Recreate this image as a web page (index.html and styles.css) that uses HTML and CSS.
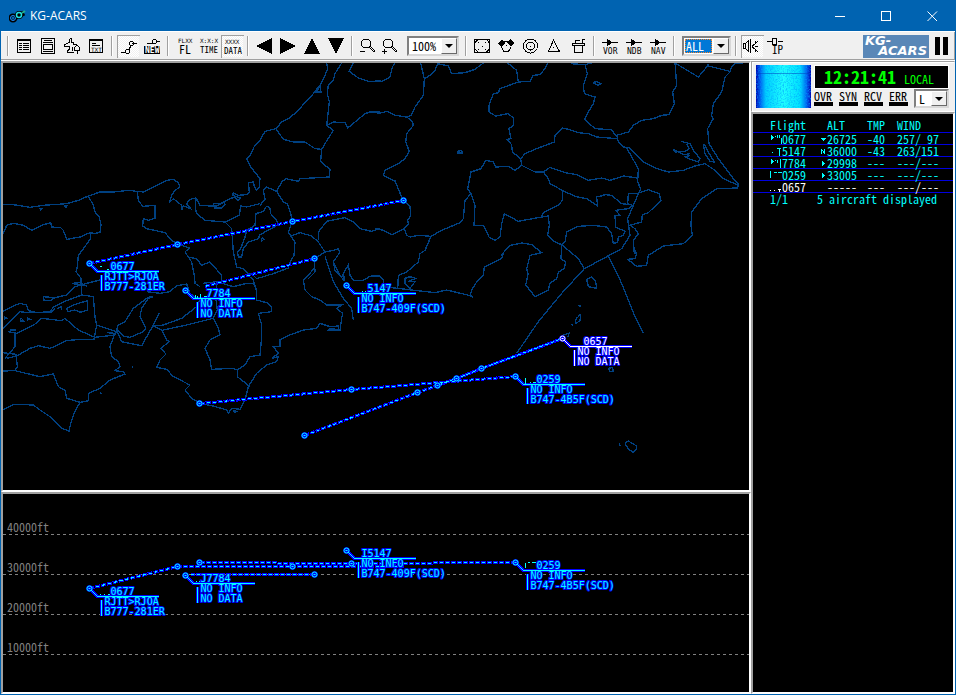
FILE: index.html
```html
<!DOCTYPE html>
<html lang="en">
<head>
<meta charset="utf-8">
<title>KG-ACARS</title>
<link rel="stylesheet" href="styles.css">
</head>
<body>
<header class="titlebar">
  <svg class="app-icon" width="18" height="14" viewBox="0 0 18 14" aria-hidden="true">
    <path d="M3 10L15 4" stroke="#000" stroke-width="5"/>
    <circle cx="4" cy="9" r="3" fill="#0063b1" stroke="#000" stroke-width="3"/>
    <circle cx="4" cy="9" r="2.5" fill="none" stroke="#2090ff"/>
    <circle cx="10" cy="6" r="3" fill="#000" stroke="#000" stroke-width="2"/>
    <circle cx="10" cy="6" r="2.5" fill="none" stroke="#20e0e0" stroke-width="1.5"/>
    <path d="M13 4L16 2" stroke="#20b090" stroke-width="2"/>
  </svg>
  <h1 class="title">KG-ACARS</h1>
  <button class="win-btn" aria-label="Minimize"><svg width="11" height="11"><path d="M0 5.5H10"/></svg></button>
  <button class="win-btn" aria-label="Maximize"><svg width="11" height="11"><path d="M.5.5H9.5V9.5H.5Z"/></svg></button>
  <button class="win-btn" aria-label="Close"><svg width="11" height="11"><path class="smooth" d="M.5.5L10 10M10 .5L.5 10"/></svg></button>
</header>

<nav class="toolbar" aria-label="Tools">
  <div class="group">
    <button class="tool" aria-label="Flight list"><svg><path d="M5.5 5.5H18.5V18.5H5.5ZM5 6.5H19M7 9.500H10M11 9.500H17M7 11.500H10M11 11.500H17M7 13.500H10M11 13.500H17M7 15.500H10M11 15.500H17"/></svg></button>
    <button class="tool" aria-label="Message window"><svg><path d="M5.500 4.500H18.500V19.500H5.500ZM8 6.500H16M7 8.500H17M7.500 10.500H16.500V15.500H7.500ZM7 17.500H17"/></svg></button>
    <button class="tool" aria-label="Aircraft"><svg><path d="M9.500 4.500H11.500V8.500H13.500V10.500H16.500M9.500 4.500V8.500L4.500 10.500V12.500H9.500V15.500L7.500 16.500V18.500H13.500M16.500 10.500L19.500 13.500V16.500H14.500V13.500L16.500 11.500M17.500 16.500V19.500M12.500 12.500V16.500"/></svg></button>
    <button class="tool" aria-label="Text log"><svg><path d="M5.500 5.500H18.500V18.500H5.500ZM5 6.500H19M8 9.500H12M8 11.500H16"/><text class="micro" x="7" y="18">TXT</text></svg></button>
  </div>
  <div class="group">
    <button class="tool pressed" aria-label="Show trails" aria-pressed="true"><svg><path d="M5 18.500H10M13 16L15 11M16 9.500H21"/><circle cx="11.500" cy="17.500" r="2"/><circle cx="15.500" cy="9.500" r="2"/></svg></button>
    <button class="tool" aria-label="New trail"><svg><path d="M7 9.500H13M16 7.500H20"/><circle cx="14.500" cy="7.500" r="2"/><rect class="solid" x="4" y="12" width="16" height="8"/><text class="inverse" x="5" y="19">NEW</text></svg></button>
  </div>
  <div class="group">
    <button class="tool" aria-label="Flight level"><svg><text class="micro" x="6" y="9">FLXX</text><text class="big" x="7" y="20">FL</text></svg></button>
    <button class="tool" aria-label="Time"><svg><text class="micro" x="4" y="9">X:X:X</text><text class="mid" x="4" y="19">TIME</text></svg></button>
    <button class="tool pressed" aria-label="Data" aria-pressed="true"><svg><text class="micro" x="5" y="10">XXXX</text><text class="mid" x="4" y="20">DATA</text></svg></button>
  </div>
  <div class="group">
    <button class="tool" aria-label="Left"><svg><path class="solid" d="M4 12L20 4V20Z"/></svg></button>
    <button class="tool" aria-label="Right"><svg><path class="solid" d="M20 12L4 4V20Z"/></svg></button>
    <button class="tool" aria-label="Up"><svg><path class="solid" d="M12 4L20 20H4Z"/></svg></button>
    <button class="tool" aria-label="Down"><svg><path class="solid" d="M12 20L20 4H4Z"/></svg></button>
  </div>
  <div class="group">
    <button class="tool" aria-label="Zoom out"><svg><circle cx="10" cy="9.500" r="4.500"/><path d="M13 13L18 18L19 17L14 12M4 17.500H9"/></svg></button>
    <button class="tool" aria-label="Zoom in"><svg><circle cx="8" cy="9.500" r="4.500"/><path d="M11 13L16 18L17 17L12 12M2 17.500H7M4.500 15V20"/></svg></button>
    <label class="combo zoom"><select aria-label="Zoom"><option>100%</option></select><span class="arrow"></span></label>
  </div>
  <div class="group">
    <button class="tool" aria-label="Range square"><svg><path d="M4.500 5.500H19.500V18.500H4.500ZM5 8.500L8.500 5M16 5L19.500 9M5 15L8.500 18.500M16 18.500L19.500 15M8 8.500H9M15 8.500H16M8 15.500H9M15 15.500H16M12 12.500H13"/></svg></button>
    <button class="tool" aria-label="Sectors"><svg><path class="solid" d="M4 9L8 5L11 9L7 13ZM20 9L16 5L13 9L17 13Z"/><path d="M9 7.500H15M7.500 13L10 17.500H14.500L17 13M12 11.500H13"/></svg></button>
    <button class="tool" aria-label="Rings"><svg><circle cx="12.500" cy="12" r="7"/><circle cx="12.500" cy="12" r="4"/><path d="M12 12.500H13"/></svg></button>
    <button class="tool" aria-label="Triangle"><svg><path d="M11.500 6L17.500 17.500H6.500ZM11 13.500H12"/></svg></button>
    <button class="tool" aria-label="Clear"><svg><path d="M6.500 9.500H18.500V11.500H6.500ZM8.500 12V18.500H16.500V12M9.500 9V6.500H13.500M16 9V5.500H19"/></svg></button>
  </div>
  <div class="group">
    <button class="tool" aria-label="VOR"><svg><path d="M4 8.500H20"/><path class="solid" d="M9 5L15 8.500L9 12Z"/><text class="small" x="5" y="20">VOR</text></svg></button>
    <button class="tool" aria-label="NDB"><svg><path d="M4 8.500H20"/><path class="solid" d="M9 5L15 8.500L9 12Z"/><text class="small" x="5" y="20">NDB</text></svg></button>
    <button class="tool" aria-label="NAV"><svg><path d="M4 8.500H20"/><path class="solid" d="M9 5L15 8.500L9 12Z"/><text class="small" x="5" y="20">NAV</text></svg></button>
  </div>
  <div class="group">
    <label class="combo filter"><select aria-label="Filter"><option>ALL</option></select><span class="arrow"></span></label>
  </div>
  <div class="group">
    <button class="tool pressed" aria-label="Mute" aria-pressed="true"><svg><path d="M3.500 9.500H5.500V14.500H3.500ZM6 9L9 6.500M6 15L9 17.500M8.500 6V18M10.500 5V19M12 12.500L18 7M12 12.500L18 18M15 12.500H18M15.500 7V10M15.500 15V18"/></svg></button>
    <button class="tool" aria-label="IP"><svg><path d="M3 7.500H9M14 7.500H19M8.500 4.500H12.500V10.500H8.500Z"/><text class="ip" x="8" y="20">IP</text></svg></button>
  </div>
  <div class="brand">
    <div class="logo"><span class="logo-top">KG-</span><span class="logo-bottom">ACARS</span></div>
    <button class="pause" aria-label="Pause"></button>
  </div>
</nav>

<main class="workspace">
  <div class="views">
    <section class="view map" aria-label="Map">
      <svg class="canvas">
        <g transform="translate(-3 -63)">
          <g class="coast">
            <g transform="translate(0 62) scale(.33333)">
              <polyline points="980,3 983,20 975,40 960,70 940,95 915,122 890,150 865,170 845,180 828,200 795,208 780,235 762,255 750,280 740,292 752,315 768,335 780,350 778,375 770,385 762,370 760,360 745,362 748,390 740,398 715,400 700,392 698,400 722,408 715,416 705,405 690,410 680,415 660,425 640,425 645,438 665,438 675,428 672,420 650,432 630,432 600,430 588,408 570,412 560,425 572,440 550,432 545,445 545,430 520,410 508,422 515,400 525,385 540,375 535,362 520,352 500,355 480,365 455,378 430,390 410,388 385,385 340,390 300,390 265,402 235,415 200,425 130,430 90,436 40,428 10,427"/>
              <polyline points="1025,3 1005,35 1000,55 985,68 982,95 988,120 980,190 1000,205 978,240 965,262 962,298 975,310 990,322 988,345 900,350 895,358 858,350 845,360 830,388"/>
              <polyline points="828,200 850,232 880,240 915,240 945,260 965,262"/>
              <polyline points="980,190 1000,180 1035,182 1043,198 1065,180 1095,155 1110,150 1140,150"/>
              <polyline points="1060,3 1048,28 1075,48 1105,58 1140,58"/>
              <polyline points="780,430 795,412 790,385 800,375 830,388 850,420 862,425 872,455 877,478 865,510 872,522 885,540 882,580 870,600 865,618"/>
              <polyline points="588,410 586,440 590,455 615,475 675,480 718,460 722,432 740,435 780,425"/>
              <polyline points="800,432 790,448 768,455 765,490 740,505 735,525 722,560 712,570 715,585 725,585 730,560 745,540 775,530 780,518 835,488 830,475 812,455 810,438 800,432"/>
              <polyline points="675,480 695,500 700,570 710,615 730,620 740,632 760,640 770,650 820,635 865,618"/>
              <polyline points="872,522 900,512 935,522 955,540 975,570 1000,565 1015,560 1020,570 1000,600 1005,625 1020,640"/>
              <polyline points="955,535 955,510 980,478 1035,467 1060,480 1080,500 1115,508 1140,500"/>
              <polyline points="975,570 943,590 945,630 925,650"/>
              <polyline points="1045,608 1030,635 1035,655 1028,640 1045,608 1050,640 1060,655 1090,655 1110,643 1140,640"/>
              <polyline points="265,402 280,430 285,450 298,465 303,490 300,510 285,515 270,512 240,525 200,532 190,505 182,497 155,495 152,482 125,490 95,505 70,490 40,484 20,490 10,515"/>
              <polyline points="270,512 272,530 250,560 235,580 232,614"/>
              <polyline points="412,388 415,415 428,433 465,430 465,468 445,475 430,470 428,492 440,500 495,512 515,535 530,545 568,558 555,570 575,600 583,640"/>
              <polyline points="565,585 590,590 605,610 630,600 665,640 665,660"/>
              <polyline points="948,82 960,75 963,90 948,90 955,80"/>
              <polyline points="785,527 792,532 785,537 785,527"/>
              <polyline points="118,440 125,440 120,445"/>
              <polyline points="192,430 202,430 198,437 192,430"/>
            </g>
            <g transform="translate(375 62) scale(.33333)">
              <polyline points="0,55 20,58 45,45 52,15 60,3"/>
              <polyline points="137,3 148,50 145,100 120,135 108,160 95,165 112,178 115,190 95,215 92,240 103,268 90,290 70,305 30,325 25,340 60,357 80,405 90,420 105,432 107,462 98,475 100,485 88,500 95,520 105,525 130,520 168,523"/>
              <polyline points="148,50 165,40 180,25 188,5 220,12 230,35 270,32 300,22 325,3"/>
              <polyline points="0,148 10,155 35,148 60,160 95,165"/>
              <polyline points="0,500 25,505 50,518 88,500"/>
              <polyline points="398,3 425,25 430,60 375,80 370,92 355,95 342,130 342,150 362,162 400,155 415,168 415,190 402,200 408,230 395,232 410,248 412,270 437,290"/>
              <polyline points="430,60 465,58 475,40 495,38 510,20 518,3"/>
              <polyline points="588,5 630,8 650,3"/>
              <polyline points="630,8 637,35 625,70 628,95 660,105 655,125 640,150 628,172 660,200 710,203 725,225"/>
              <polyline points="437,290 450,275 490,258 538,240 540,220 562,198 580,202 610,212 640,215 665,225 725,230"/>
              <polyline points="437,290 440,310 480,330 505,330 525,316 570,332 605,338 640,355 680,348 705,355 745,342 788,348"/>
              <polyline points="440,310 420,325 400,313 362,315 355,300 332,295 318,320 288,330 278,380 288,395 270,415 265,470 255,482 200,505 168,523 150,565 135,575 130,600 95,630 70,640 68,682"/>
              <polyline points="288,395 300,430 297,490 325,490 342,525 360,535 375,525 380,485 388,455 430,478 500,465 520,462 523,490 518,520 540,540 560,548"/>
              <polyline points="505,330 520,350 525,365 562,385 562,415 550,430 505,452 500,465"/>
              <polyline points="562,385 600,403 635,410 668,432 665,405 675,403 690,398 710,400 740,425 765,428"/>
              <polyline points="725,220 730,240 745,255 765,258 805,300 840,318 880,330 925,325 960,312 990,305 1020,325 1045,350 1090,370 1090,375"/>
              <polyline points="725,220 760,210 775,190 800,175 835,170 860,160 882,158 898,125 893,90 905,70 900,3"/>
              <polyline points="900,3 970,45 995,15 1000,5"/>
              <polyline points="1000,12 1065,28"/>
              <polyline points="1105,3 1080,3 1067,20 1065,30 1050,45 1040,90 1015,125 1010,160 1015,170 998,200 1002,245 1030,290 1060,330 1075,350 1090,365 1088,378 1025,380 980,410 950,450 948,490 952,520 925,545 865,552 820,580 815,610 785,613 758,592 780,590 785,575 778,575 775,535 790,515 780,500 765,490 800,480 802,458 820,452 858,415 852,395 820,383 800,390 785,395 760,395 758,425"/>
              <polyline points="755,258 790,320 788,360 797,380 775,430 758,470 762,500 765,520 740,560 628,620 560,694"/>
              <polyline points="758,425 772,430 760,440 722,445 735,460 720,462 722,495 750,508 745,520 730,525 728,540 715,545 710,515 695,495 655,490 610,493 575,510 570,540 560,548"/>
              <polyline points="560,548 610,590 628,620"/>
              <polyline points="560,548 558,590 572,600 568,620 550,630 545,650 525,664 520,684 480,704 452,669 460,634"/>
              <polyline points="700,583 740,664 780,764 805,814"/>
              <polyline points="290,684 305,660 325,640 328,615 380,590 385,575 378,580 405,550 440,543 470,548 500,572 465,580 460,600 455,620 460,640"/>
              <polyline points="247,268 260,265 262,273 247,273 247,268"/>
              <polyline points="655,62 665,58 677,65 670,70 655,62"/>
              <polyline points="918,238 945,245 955,265 975,290 970,300 940,290 930,285 945,280"/>
              <polyline points="895,262 900,270 930,268 943,260 935,245"/>
              <polyline points="895,262 925,278 945,275"/>
              <polyline points="985,245 990,275 1005,298 1018,300 1000,270 988,245"/>
            </g>
            <g transform="translate(0 250) scale(.33333)">
              <polyline points="232,50 228,65 243,85 245,132"/>
              <polyline points="215,100 240,98 260,108 235,104 215,100"/>
              <polyline points="8,185 35,170 60,160 80,165 85,182 110,188 150,185 160,172 200,152 245,135 280,140 285,200 290,225 282,268 240,268 200,272 180,282 150,295 115,287 90,295 50,318 20,325"/>
              <polyline points="130,150 130,140 165,143 150,152 130,150"/>
              <polyline points="165,143 200,135 225,110 260,100 300,90"/>
              <polyline points="8,237 60,185 85,188 155,187 165,175"/>
              <polyline points="25,245 50,250 80,235 105,222 125,205 185,212 195,205 235,240 285,262 345,255 350,245 290,225"/>
              <polyline points="200,175 220,165 262,152 262,180 240,187 225,180 203,185 200,175"/>
              <polyline points="45,250 45,290 15,325"/>
              <polyline points="8,308 48,313 52,350 45,362 8,363"/>
              <polyline points="45,362 120,380 160,372 175,410 195,420 200,445 240,457 265,452 265,430 300,415 330,390 375,372 370,365 345,362 360,350 355,335 335,320 330,290 345,250 320,248"/>
              <polyline points="240,457 222,490 212,520 207,543 185,535 150,500 120,480 100,465 40,463 8,480"/>
              <polyline points="460,140 445,145 425,175 420,200 437,235 430,245 390,262 370,258 350,238 355,225 375,215 400,175 440,145 455,138"/>
              <polyline points="350,240 365,275 425,287 460,225 478,190"/>
              <polyline points="440,125 480,130 510,125 530,107 560,102 570,130 600,150 590,170 545,205 490,225 460,228 485,240 500,270 508,275 482,295 498,312 480,330 470,352 500,358 520,380 550,395 570,405 555,420 575,445 600,460 640,468 680,480 685,490 695,475 720,478 735,450 745,410 770,370 800,345 830,335 835,320 815,325 835,310 820,290 840,290 840,270 870,255 910,240 950,235 960,220 990,230 1015,228 1015,240 985,240 990,235 1020,240 1025,205 1028,190 1010,175 1025,165 980,165 960,150 935,140 915,120 910,90 930,70 945,50"/>
              <polyline points="490,240 560,225 640,205 655,235 660,255 630,270 615,295 630,330 635,358 700,355 712,360 735,345 750,320 780,315 785,260 785,225 775,190 815,185 815,170 800,158 770,150 770,120 760,100 740,100 700,110 650,95 610,100"/>
              <polyline points="770,125 760,90 752,80"/>
              <polyline points="640,205 652,180 648,150 650,96"/>
              <polyline points="583,76 585,100 600,110"/>
              <polyline points="712,358 712,380 750,410"/>
              <polyline points="975,20 1000,95 1030,145 1055,175 1060,210"/>
              <polyline points="1000,35 1020,75 1030,90 1030,70"/>
              <polyline points="395,350 400,352"/><polyline points="300,428 305,430"/>
              <polyline points="700,480 710,485 703,488 700,480"/>
              <polyline points="62,203 72,213 62,213 62,203"/>
              <polyline points="172,175 185,170 185,180"/>
              <polyline points="82,203 90,208 82,210"/>
              <polyline points="12,200 20,205 12,208"/><polyline points="30,240 48,240"/>
            </g>
            <g transform="translate(375 250) scale(.33333)">
              <polyline points="0,80 15,78 25,90 25,110 110,120 180,128 215,120 290,138 295,142 285,137 290,120"/>
              <polyline points="90,85 90,100 105,115 120,95 100,95 122,85 105,80 90,85"/>
              <polyline points="560,130 490,215 425,310"/>
              <polyline points="780,0 785,15"/>
              <polyline points="635,88 650,80 662,95 665,115 640,110 635,88"/>
              <polyline points="610,165 617,168 612,170"/>
              <polyline points="608,200 617,193 615,212 603,220 602,210 608,200"/>
              <polyline points="588,222 595,226"/>
              <polyline points="565,255 582,250 578,262"/>
              <polyline points="702,355 712,352 715,365 703,365 702,355"/>
              <polyline points="750,580 760,573 785,588 785,598 775,607 760,598 750,580"/>
              <polyline points="733,580 735,587"/>
            </g>
          </g>

          <g class="halo">
            <polyline points="89,263 177,244 292,221 403,200"/>
            <polyline points="314,258 204,286"/>
            <polyline points="515,376 351,389 199,403"/>
            <polyline points="304,435 417,392 437,385"/>
            <polyline class="dense" points="437,385 456,378 481,368 562,338"/>
          </g>
          <g class="trail">
            <polyline points="89,263 177,244 292,221 403,200"/>
            <polyline points="314,258 204,286"/>
            <polyline points="515,376 351,389 199,403"/>
            <polyline points="304,435 417,392 437,385"/>
            <polyline class="dense" points="437,385 456,378 481,368 562,338"/>
          </g>
          <defs>
            <g id="fix"><path class="lead-halo" d="M2 2L8 8H69M12 11V27"/><circle class="ring-halo" r="3"/><circle class="ring" r="2.500"/><path class="dot" d="M-1 0H1"/></g>
            <g id="point"><circle class="ring-halo" r="3"/><circle class="ring" r="2.500"/><path class="dot" d="M-1 0H1"/></g>
            <path id="leader" class="lead" d="M2 2L8 8H69M12 11V27"/>
          </defs>
          <use href="#point" x="177.500" y="244.500"/><use href="#point" x="292.500" y="221.500"/><use href="#point" x="403.500" y="200.500"/>
          <use href="#point" x="314.500" y="258.500"/><use href="#point" x="351.500" y="389.500"/><use href="#point" x="199.500" y="403.500"/>
          <use href="#point" x="304.500" y="435.500"/><use href="#point" x="417.500" y="392.500"/><use href="#point" x="437.500" y="385.500"/>
          <use href="#point" x="456.500" y="378.500"/><use href="#point" x="481.500" y="368.500"/>

          <g class="plane" transform="translate(89.500 263.500)"><use href="#fix"/><path class="frag" d="M10 3h2M17 6h2"/><text x="21" y="6">0677</text><text x="15" y="16">RJTT&gt;RJOA</text><text x="15" y="26">B777-281ER</text><use href="#leader"/></g>
          <g class="plane" transform="translate(185.500 290.500)"><use href="#fix"/><path class="frag" d="M10 4v3M12 5v2M15 3v4M18 6h3"/><text x="21" y="6">7784</text><text x="15" y="16">NO INFO</text><text x="15" y="26">NO DATA</text><use href="#leader"/></g>
          <g class="plane" transform="translate(346.500 285.500)"><use href="#fix"/><path class="frag" d="M15 6h1M18 6h1"/><text x="21" y="6">5147</text><text x="15" y="16">NO INFO</text><text x="15" y="26">B747-409F(SCD)</text><use href="#leader"/></g>
          <g class="plane" transform="translate(515.500 376.500)"><use href="#fix"/><path class="frag" d="M10 1v6M14 6h1M17 6h3"/><text x="21" y="6">0259</text><text x="15" y="16">NO INFO</text><text x="15" y="26">B747-4B5F(SCD)</text><use href="#leader"/></g>
          <g class="plane selected" transform="translate(562.500 338.500)"><use href="#fix"/><text x="21" y="6">0657</text><text x="15" y="16">NO INFO</text><text x="15" y="26">NO DATA</text><use href="#leader"/></g>
        </g>
      </svg>
    </section>

    <section class="view profile" aria-label="Altitude profile">
      <svg class="canvas">
        <g class="grid-lines"><line x1="0" y1="40.500" x2="100%" y2="40.500"/><line x1="0" y1="80.500" x2="100%" y2="80.500"/><line x1="0" y1="120.500" x2="100%" y2="120.500"/><line x1="0" y1="160.500" x2="100%" y2="160.500"/></g>
        <g class="scale"><text x="4" y="38">40000ft</text><text x="4" y="78">30000ft</text><text x="4" y="118">20000ft</text><text x="4" y="158">10000ft</text></g>
        <g transform="translate(-3 -494)">
          <g class="halo">
            <polyline points="89,588 177,566 403,566"/>
            <polyline points="314,574 190,574"/>
            <polyline points="199,562 275,562 278,563 430,563 435,562 515,562"/>
          </g>
          <g class="trail">
            <polyline points="89,588 177,566 403,566"/>
            <polyline points="314,574 190,574"/>
            <polyline points="199,562 275,562 278,563 430,563 435,562 515,562"/>
          </g>
          <use href="#point" x="177.500" y="566.500"/><use href="#point" x="292.500" y="566.500"/><use href="#point" x="199.500" y="562.500"/>
          <use href="#point" x="351.500" y="563.500"/><use href="#point" x="314.500" y="574.500"/>
          <g class="plane" transform="translate(89.500 588.500)"><use href="#fix"/><path class="frag" d="M10 6h1M14 6h1M18 6h2"/><text x="21" y="6">0677</text><text x="15" y="16">RJTT&gt;RJOA</text><text x="15" y="26">B777-281ER</text><use href="#leader"/></g>
          <g class="plane" transform="translate(185.500 575.500)"><use href="#fix"/><path class="frag" d="M10 6h1M13 6h1"/><text x="15" y="6">J7784</text><text x="15" y="16">NO INFO</text><text x="15" y="26">NO DATA</text><use href="#leader"/></g>
          <g class="plane" transform="translate(346.500 550.500)"><use href="#fix"/><text x="15" y="6">I5147</text><text x="15" y="16">NO INFO</text><text x="15" y="26">B747-409F(SCD)</text><use href="#leader"/></g>
          <g class="plane" transform="translate(515.500 562.500)"><use href="#fix"/><path class="frag" d="M10 0v5M12 0h2M16 0h4"/><text x="21" y="6">0259</text><text x="15" y="16">NO INFO</text><text x="15" y="26">B747-4B5F(SCD)</text><use href="#leader"/></g>
        </g>
      </svg>
    </section>
  </div>

  <aside class="side">
    <section class="status">
      <svg class="spectrum" aria-hidden="true">
        <filter id="noise" x="0" y="0" width="100%" height="100%"><feTurbulence type="fractalNoise" baseFrequency=".7" numOctaves="2" seed="4"/><feColorMatrix values="0 0 0 0 0  0 0 0 0 .35  0 0 0 0 1  3 0 0 0 -1.300"/></filter>
        <linearGradient id="band"><stop offset="0" stop-color="#0000b0"/><stop offset=".08" stop-color="#0060f0"/><stop offset=".18" stop-color="#00d0ff"/><stop offset=".5" stop-color="#20ffff"/><stop offset=".8" stop-color="#00e0ff"/><stop offset=".92" stop-color="#0060f0"/><stop offset="1" stop-color="#0000b0"/></linearGradient>
        <rect width="100%" height="100%" fill="url(#band)"/>
        <rect width="100%" height="100%" filter="url(#noise)" opacity=".6"/>
        <rect y="8" width="100%" height="1" fill="#0040c0" opacity=".5"/>
      </svg>
      <div class="readout">
        <div class="clock"><time>12:21:41</time><span>LOCAL</span></div>
        <div class="lamps">
          <div class="lamp">OVR</div><div class="lamp">SYN</div><div class="lamp">RCV</div><div class="lamp">ERR</div>
          <label class="combo zone"><select aria-label="Time zone"><option>L</option></select><span class="arrow"></span></label>
        </div>
      </div>
    </section>
    <section class="list">
      <table>
        <thead><tr><th class="flight">Flight</th><th class="alt"><i class="mark"></i>ALT</th><th class="tmp">TMP</th><th class="wind">WIND</th></tr></thead>
        <tbody>
          <tr><td class="flight"><svg class="hidden-id"><path d="M1.500 0v5M2.500 1v3M3.500 2v1M5.500 1v1M7.500 0v3M9.500 0v3M11.500 3v6"/></svg>0677</td><td class="alt"><svg class="mark"><path class="fill" d="M1 5h5L3.500 8Z"/></svg>26725</td><td>-40</td><td>257/ 97</td></tr>
          <tr><td class="flight"><svg class="hidden-id"><path d="M2 5.500h1M7 1.500h4M9.500 1v8"/></svg>5147</td><td class="alt"><svg class="mark"><path d="M1.500 9V4M1.500 4L4.500 8.500M4.500 9V4"/></svg>36000</td><td>-43</td><td>263/151</td></tr>
          <tr><td class="flight"><svg class="hidden-id"><path d="M1.500 0v5M2.500 1v3M3.500 2v1M5.500 1v1M7.500 1v3M10.500 0v9"/></svg>7784</td><td class="alt"><svg class="mark"><path class="fill" d="M2 4L5 6.500L2 9Z"/></svg>29998</td><td>---</td><td>---/---</td></tr>
          <tr><td class="flight"><svg class="hidden-id"><path d="M.5 0v7M4 1.500h3M8 1.500h4"/></svg>0259</td><td class="alt"><svg class="mark"><path class="fill" d="M2 4L5 6.500L2 9Z"/></svg>33005</td><td>---</td><td>---/---</td></tr>
          <tr class="current"><td class="flight"><svg class="hidden-id"><path d="M0 7.500h1M4 7.500h1M8 6.500h3M9.500 6v3"/></svg>0657</td><td class="alt"><i class="mark"></i>-----</td><td>---</td><td>---/---</td></tr>
        </tbody>
        <tfoot><tr><td class="flight">1/1</td><td colspan="3">5 aircraft displayed</td></tr></tfoot>
      </table>
    </section>
  </aside>
</main>
</body>
</html>
```
FILE: styles.css
```css
:root {
  --face: #f0f0f0;
  --shade: #a0a0a0;
  --blue: #0063b1;
  --cyan: #00ffff;
  --halo: #0000ff;
  --gothic: "Noto Sans Mono CJK JP", "Noto Sans CJK JP", monospace;
}

*, *::before { box-sizing: border-box; }

body {
  margin: 0;
  height: 100vh;
  display: flex;
  flex-direction: column;
  border: 1px solid var(--blue);
  background: var(--face);
  font-family: var(--gothic);
  font-size: 12px;
  font-feature-settings: "hwid" 1;
  overflow: hidden;
}

button {
  padding: 0;
  border: 0;
  background: none;
  font: inherit;
}

/* title bar */
.titlebar {
  flex: none;
  height: 30px;
  display: flex;
  align-items: center;
  background: var(--blue);
  color: #fff;
}
.app-icon { margin: 0 3px 0 8px; }
.title {
  flex: 1;
  margin: 0;
  font: 12px/16px "Open Sans", "Noto Sans", sans-serif;
}
.win-btn {
  width: 46px;
  height: 30px;
  display: grid;
  place-items: center;
}
.win-btn path {
  fill: none;
  stroke: #fff;
  shape-rendering: crispEdges;
}
.win-btn .smooth { shape-rendering: auto; }

/* toolbar */
.toolbar {
  flex: none;
  height: 30px;
  display: flex;
  align-items: center;
  padding: 0 7px 0 6px;
  border-top: 1px solid #fff;
  border-bottom: 1px solid #fff;
  box-shadow: inset 0 -1px var(--shade), inset -1px 0 var(--shade);
}
.group {
  display: flex;
  align-items: center;
}
.group::before {
  content: "";
  width: 2px;
  height: 20px;
  margin-right: 3px;
  border-left: 1px solid var(--shade);
  border-right: 1px solid #fff;
}
.group + .group { margin-left: 3px; }
.tool {
  width: 24px;
  height: 24px;
  display: block;
}
.tool svg {
  width: 24px;
  height: 24px;
  display: block;
  fill: none;
  stroke: #000;
  shape-rendering: crispEdges;
}
.tool .solid { fill: #000; stroke: none; }
.tool text { fill: #000; stroke: none; }
.tool .micro { font: 6px "DejaVu Sans Mono", monospace; }
.tool .small { font: 8px "DejaVu Sans Mono", monospace; }
.tool .mid { font-size: 9px; }
.tool .big { font-size: 12px; }
.tool .ip { font-size: 11px; }
.tool .inverse { font: bold 8px "DejaVu Sans Mono", monospace; fill: #fff; }
.pressed {
  background: conic-gradient(#fff 25%, var(--face) 0 50%, #fff 0 75%, var(--face) 0) 0 0 / 2px 2px content-box;
  padding: 1px;
  box-shadow: inset 1px 1px var(--face), inset 2px 2px var(--shade);
}
.pressed svg { margin: -1px; }

.combo {
  display: flex;
  background: #fff;
  border: 2px solid;
  border-color: #808080 #d8d8d8 #d8d8d8 #808080;
}
.combo select {
  flex: 1;
  min-width: 0;
  appearance: none;
  border: 0;
  border-radius: 0;
  padding: 0 3px;
  background: #fff;
  color: #000;
  font: 12px/14px var(--gothic);
  font-feature-settings: "hwid" 1;
}
.arrow {
  flex: none;
  width: 16px;
  display: grid;
  place-items: center;
  background: var(--face);
  border: 1px solid;
  border-color: #fff #696969 #696969 #fff;
}
.arrow::before {
  content: "";
  border: 4px solid transparent;
  border-top-color: #000;
  border-bottom: 0;
}
.zoom { width: 52px; height: 20px; margin: 0 3px; }
.filter { width: 49px; height: 20px; margin: 0 1px 0 4px; }
.filter select {
  margin: 1px;
  padding: 0 1px;
  background: #0078d7;
  color: #fff;
  outline: 1px dotted #ff8728;
  outline-offset: -1px;
}

.brand {
  margin-left: auto;
  display: flex;
  align-items: center;
  gap: 6px;
}
.logo {
  width: 66px;
  height: 23px;
  display: flex;
  flex-direction: column;
  padding: 1px 2px;
  background: #5987b7;
  color: #fff;
  font: italic bold 13px/10px "DejaVu Sans", sans-serif;
}
.logo-bottom { align-self: flex-end; }
.pause {
  width: 13px;
  height: 18px;
  border: solid #000;
  border-width: 0 5px;
}

/* views */
.workspace {
  flex: 1;
  min-height: 0;
  display: grid;
  grid-template-columns: minmax(0, 1fr) 204px;
}
.views {
  display: grid;
  grid-template-rows: minmax(0, 1fr) 202px;
}
.view, .list {
  background: #000;
  border: 2px solid;
  border-color: var(--shade) #fff #fff var(--shade);
}
.canvas {
  display: block;
  width: 100%;
  height: 100%;
}
.coast {
  fill: none;
  stroke: #004080;
  stroke-width: 4;
  shape-rendering: crispEdges;
}
.halo, .trail {
  fill: none;
  shape-rendering: crispEdges;
  transform: translate(.5px, .5px);
}
.halo { stroke: var(--halo); stroke-width: 3; stroke-dasharray: 5 1; }
.halo .dense { stroke-dasharray: none; }
.trail { stroke: var(--cyan); stroke-dasharray: 3 3; stroke-dashoffset: -1; }
.trail .dense { stroke-dasharray: 4 2; }
.ring-halo { fill: var(--halo); stroke: var(--halo); }
.ring { fill: var(--halo); stroke: var(--cyan); }
.dot { stroke: var(--cyan); }
.lead, .lead-halo, .frag { fill: none; shape-rendering: crispEdges; }
.lead, .frag { stroke: var(--cyan); }
.lead-halo { stroke: var(--halo); stroke-width: 3; }
.plane text {
  fill: var(--cyan);
  stroke: var(--halo);
  stroke-width: 2px;
  stroke-linejoin: round;
  paint-order: stroke;
  font: 10px "DejaVu Sans Mono", monospace;
  white-space: pre;
}
.selected { --cyan: #ffffff; }
.grid-lines {
  stroke: #808080;
  stroke-dasharray: 3 3;
  shape-rendering: crispEdges;
}
.scale { fill: #808080; }

/* side column */
.side {
  display: flex;
  flex-direction: column;
}
.status {
  flex: none;
  height: 51px;
  display: flex;
  gap: 3px;
  padding: 3px 5px 0 4px;
  border: 1px solid;
  border-color: var(--shade) var(--face) #fff var(--shade);
  box-shadow: inset 1px 1px #fff;
}
.spectrum {
  flex: none;
  width: 55px;
  height: 43px;
}
.readout { flex: 1; }
.clock {
  height: 24px;
  display: flex;
  align-items: baseline;
  gap: 8px;
  padding-left: 9px;
  background: #000;
  border: 1px solid #fff;
  color: #00ff00;
  line-height: 20px;
}
.clock time { font-size: 18px; font-weight: bold; }
.lamps {
  display: flex;
  align-items: flex-start;
  gap: 6px;
}
.lamp {
  width: 19px;
  line-height: 13px;
  border-bottom: 4px solid #000;
}
.zone {
  flex: 1;
  height: 19px;
}

.list {
  flex: 1;
  padding-top: 3px;
  color: var(--cyan);
}
table {
  width: 100%;
  table-layout: fixed;
  border-collapse: collapse;
}
th, td {
  height: 12px;
  padding: 0;
  line-height: 11px;
  font-weight: normal;
  text-align: left;
  white-space: pre;
}
thead tr { height: 15px; }
thead tr, tbody tr { border-bottom: 1px solid #0000e0; }
.current { color: #fff; }
th.flight { width: 64px; }
.flight { padding-left: 17px; }
th.alt { width: 50px; }
th.tmp { width: 30px; }
.mark {
  display: inline-block;
  width: 7px;
  height: 10px;
  margin-left: 3px;
  vertical-align: top;
}
.hidden-id {
  width: 12px;
  height: 9px;
  margin-top: 2px;
  vertical-align: top;
}
.list svg { fill: none; stroke: currentColor; shape-rendering: crispEdges; }
.list .fill { fill: currentColor; stroke: none; }
```
